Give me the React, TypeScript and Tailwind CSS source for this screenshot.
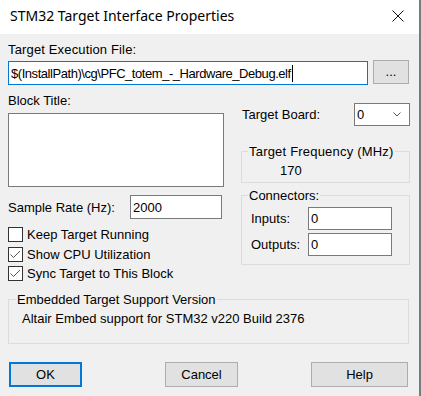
import React from "react";

const Check = () => (
  <svg width="13" height="13" viewBox="0 0 13 13" className="block">
    <path d="M1.5 6.5 L4.5 9.5 L11 3" fill="none" stroke="#555555" strokeWidth="1" />
  </svg>
);

function Checkbox({ checked, label, className }: { checked?: boolean; label: string; className?: string }) {
  return (
    <div className={"flex items-center h-[15px] " + (className ?? "")}>
      <div className="w-[15px] h-[15px] border border-[#333333] bg-white flex items-center justify-center shrink-0">
        {checked && <Check />}
      </div>
      <span className="ml-[4px] leading-[15px]">{label}</span>
    </div>
  );
}

export default function App() {
  return (
    <div className="w-[421px] h-[396px] bg-[#f0f0f0] border-r-2 border-[#7a7a7a] overflow-hidden text-black font-['Liberation_Sans',Arial,sans-serif] text-[13px] leading-[15px]">
      {/* Title bar */}
      <div className="h-[34px] bg-white flex items-center pl-[10px] pr-[15px] pb-[2px]">
        <span className="flex-1 font-['Noto_Sans',sans-serif] text-[14px] leading-[18px] text-black">
          STM32 Target Interface Properties
        </span>
        <svg width="12" height="12" viewBox="0 0 12 12" className="block">
          <path d="M0.5 0.5 L11.5 11.5 M11.5 0.5 L0.5 11.5" stroke="#111111" strokeWidth="1" fill="none" />
        </svg>
      </div>

      <div className="pl-[8px] pr-[9px]">
        <div className="mt-[8px] leading-[15px] tracking-[0.15px]">Target Execution File:</div>
        <div className="mt-[3px] flex h-[25px] items-start">
          <div className="mt-[1px] w-[360px] h-[24px] border border-[#0078d7] bg-white flex items-center pl-[2px]">
            <span className="tracking-[-0.45px]">{"$(InstallPath)\\cg\\PFC_totem_-_Hardware_Debug.elf"}</span>
            <span className="w-px h-[17px] bg-black ml-px"></span>
          </div>
          <div className="ml-[5px] w-[36px] h-[24px] border border-[#adadad] bg-[#e1e1e1] flex items-center justify-center pb-[2px]">
            ...
          </div>
        </div>

        <div className="flex items-start">
          {/* Left column */}
          <div className="w-[216px] flex flex-col">
            <div className="mt-[8px] leading-[15px]">Block Title:</div>
            <div className="mt-[5px] h-[74px] border border-[#7a7a7a] bg-white"></div>
            <div className="mt-[8px] h-[24px] flex items-center">
              <span className="flex-1">Sample Rate (Hz):</span>
              <div className="w-[92px] h-[24px] mr-[2px] border border-[#7a7a7a] bg-white flex items-center pl-[2px]">
                2000
              </div>
            </div>
            <Checkbox className="mt-[8px]" label="Keep Target Running" />
            <Checkbox className="mt-[5px]" checked label="Show CPU Utilization" />
            <Checkbox className="mt-[4px]" checked label="Sync Target to This Block" />
          </div>

          {/* Right column */}
          <div className="ml-[17px] w-[169px] flex flex-col">
            <div className="mt-[18px] h-[23px] flex items-center">
              <span className="flex-1 pl-[1px]">Target Board:</span>
              <div className="w-[56px] h-[23px] border border-[#7a7a7a] bg-white flex items-center justify-between pl-[2px] pr-[8px]">
                <span>0</span>
                <svg width="8" height="5" viewBox="0 0 8 5" className="block">
                  <path d="M0.5 0.5 L4 4 L7.5 0.5" stroke="#555555" strokeWidth="1" fill="none" />
                </svg>
              </div>
            </div>

            <fieldset className="mt-[18px] border border-[#dcdcdc]">
              <legend className="ml-[6px] px-[1px] leading-[15px] tracking-[0.2px]">Target Frequency (MHz)</legend>
              <div className="pl-[38px] mt-[4px] mb-[4px] leading-[15px]">170</div>
            </fieldset>

            <fieldset className="mt-[5px] border border-[#dcdcdc]">
              <legend className="ml-[6px] px-[1px] leading-[15px]">Connectors:</legend>
              <div className="mt-[4px] h-[23px] flex items-center pl-[9px]">
                <span className="w-[57px]">Inputs:</span>
                <div className="w-[84px] h-[23px] border border-[#7a7a7a] bg-white flex items-center pl-[2px]">0</div>
              </div>
              <div className="mt-[3px] mb-[8px] h-[23px] flex items-center pl-[9px]">
                <span className="w-[57px]">Outputs:</span>
                <div className="w-[84px] h-[23px] border border-[#7a7a7a] bg-white flex items-center pl-[2px]">0</div>
              </div>
            </fieldset>
          </div>
        </div>

        <fieldset className="mt-[11px] mr-[1px] border border-[#dcdcdc]">
          <legend className="ml-[7px] px-[1px] leading-[15px]">Embedded Target Support Version</legend>
          <div className="pl-[13px] mt-[4px] mb-[17px] leading-[15px]">
            Altair Embed support for STM32 v220 Build 2376
          </div>
        </fieldset>

        <div className="mt-[18px] flex">
          <div className="ml-[1px] w-[73px] h-[25px] border-2 border-[#0078d7] bg-[#e1e1e1] flex items-center justify-center">
            OK
          </div>
          <div className="ml-[83px] w-[73px] h-[25px] border border-[#adadad] bg-[#e1e1e1] flex items-center justify-center">
            Cancel
          </div>
          <div className="ml-[73px] w-[97px] h-[25px] border border-[#adadad] bg-[#e1e1e1] flex items-center justify-center">
            Help
          </div>
        </div>
      </div>
    </div>
  );
}
